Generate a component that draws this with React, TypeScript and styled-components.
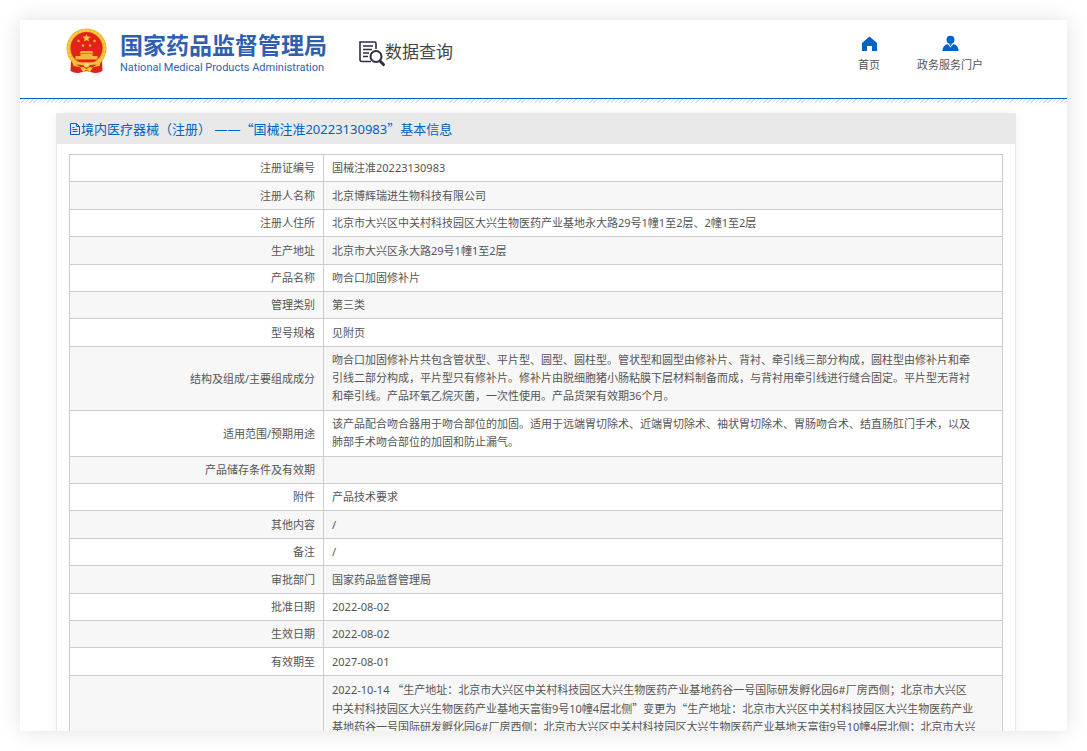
import React from "react";
import styled, { createGlobalStyle } from "styled-components";

const blue = "#0062c4";

const Global = createGlobalStyle`
  * { box-sizing: border-box; }
  body {
    margin: 0;
    background: #fff;
    color: #555;
    font: 11px/18px "Noto Sans", "Noto Sans CJK SC", sans-serif;
  }
`;

const Card = styled.div`
  margin: 20px;
  height: calc(100vh - 40px);
  overflow: hidden;
  background: #fff;
  box-shadow: 0 0 20px rgba(0, 0, 0, 0.12);
`;

const Header = styled.header`
  display: flex;
  align-items: flex-start;
  height: 79px;
  padding: 8px 84px 0 46px;
  border-bottom: 1px solid ${blue};
`;

const Brand = styled.a`
  display: flex;
  gap: 13px;
  color: #2f5fb0;
  text-decoration: none;
`;

const BrandText = styled.span`
  display: flex;
  flex-direction: column;
  padding-top: 2px;
`;

const BrandName = styled.strong`
  font: 700 23px/28px "Noto Sans CJK SC", sans-serif;
`;

const BrandEnglish = styled.span`
  font: 11px/20px Roboto, sans-serif;
`;

const QueryTitle = styled.h1`
  display: flex;
  align-items: center;
  margin: 13px 0 0 32px;
  color: #444;
  font: 400 17px/30px "Noto Sans CJK SC", sans-serif;
`;

const QueryText = styled.span`
  margin-top: -6px;
`;

const Nav = styled.nav`
  display: flex;
  gap: 37px;
  margin-left: auto;
  padding-top: 7px;
`;

const NavLink = styled.a`
  display: flex;
  flex-direction: column;
  align-items: center;
  gap: 4px;
  color: #555;
  text-decoration: none;
`;

const Hatch = styled.div`
  height: 4px;
  background: repeating-linear-gradient(135deg, #dedee2 0 1px, #fff 1px 3px);
`;

const Panel = styled.main`
  margin: 10px 51px 0 36px;
  border: 1px solid #e9e9ec;
  box-shadow: 0 0 10px rgba(0, 0, 0, 0.06);
`;

const PanelTitle = styled.h2`
  display: flex;
  align-items: center;
  margin: 0;
  height: 30px;
  padding: 0 12px;
  background: #e9e9e9;
  color: ${blue};
  font: 400 13px/30px "Noto Sans", "Noto Sans CJK SC", sans-serif;
`;

const Wide = styled.span`
  font-family: "Noto Sans CJK SC", sans-serif;
`;

const InfoTable = styled.table`
  width: calc(100% - 24px);
  margin: 10px 12px 0;
  border-collapse: collapse;
  border: 1px solid #ccc;
`;

const Row = styled.tr`
  height: 27px;
  &:nth-child(5n + 2),
  &:nth-child(5n + 4) {
    height: 28px;
  }
  &:nth-child(even) {
    background: #f7f7f7;
  }
`;

const Label = styled.th`
  width: 254px;
  padding: 4px 8px;
  border: 1px solid #ccc;
  font-weight: 400;
  text-align: right;
`;

const Value = styled.td<{ $long: boolean }>`
  padding: ${(p) => (p.$long ? "4px 25px 5px 8px" : "4px 25px 4px 8px")};
  border: 1px solid #ccc;
`;

const rows: [string, string][] = [
  ["注册证编号", "国械注准20223130983"],
  ["注册人名称", "北京博辉瑞进生物科技有限公司"],
  ["注册人住所", "北京市大兴区中关村科技园区大兴生物医药产业基地永大路29号1幢1至2层、2幢1至2层"],
  ["生产地址", "北京市大兴区永大路29号1幢1至2层"],
  ["产品名称", "吻合口加固修补片"],
  ["管理类别", "第三类"],
  ["型号规格", "见附页"],
  ["结构及组成/主要组成成分", "吻合口加固修补片共包含管状型、平片型、圆型、圆柱型。管状型和圆型由修补片、背衬、牵引线三部分构成，圆柱型由修补片和牵引线二部分构成，平片型只有修补片。修补片由脱细胞猪小肠粘膜下层材料制备而成，与背衬用牵引线进行缝合固定。平片型无背衬和牵引线。产品环氧乙烷灭菌，一次性使用。产品货架有效期36个月。"],
  ["适用范围/预期用途", "该产品配合吻合器用于吻合部位的加固。适用于远端胃切除术、近端胃切除术、袖状胃切除术、胃肠吻合术、结直肠肛门手术，以及肺部手术吻合部位的加固和防止漏气。"],
  ["产品储存条件及有效期", ""],
  ["附件", "产品技术要求"],
  ["其他内容", "/"],
  ["备注", "/"],
  ["审批部门", "国家药品监督管理局"],
  ["批准日期", "2022-08-02"],
  ["生效日期", "2022-08-02"],
  ["有效期至", "2027-08-01"],
  ["", "2022-10-14 “生产地址：北京市大兴区中关村科技园区大兴生物医药产业基地药谷一号国际研发孵化园6#厂房西侧；北京市大兴区中关村科技园区大兴生物医药产业基地天富街9号10幢4层北侧”变更为“生产地址：北京市大兴区中关村科技园区大兴生物医药产业基地药谷一号国际研发孵化园6#厂房西侧；北京市大兴区中关村科技园区大兴生物医药产业基地天富街9号10幢4层北侧；北京市大兴"],
];

/* Curly quotes take the full-width shapes of the Chinese face. */
const Mixed = ({ text }: { text: string }) => (
  <>
    {text.split(/([“”]+)/).map((part, i) =>
      i % 2 ? <Wide key={i}>{part}</Wide> : part
    )}
  </>
);

const Emblem = () => (
  <svg width="41" height="46" viewBox="0 0 41 46" aria-hidden="true">
    <path d="M5 32 4.500 43q4 2.500 8 2l8-2 8 2q4 .5 8-2L36 32z" fill="#d9261c" />
    <circle cx="20.500" cy="20.500" r="20" fill="#eeb429" />
    <circle cx="20.500" cy="20.500" r="18" fill="none" stroke="#f8d045" strokeWidth="2" strokeDasharray="3 1" />
    <circle cx="20.500" cy="20" r="16" fill="#e3231b" />
    <path d="m20.500 6 1.100 2.600 2.900.2-2.200 1.900.7 2.800-2.500-1.500-2.500 1.500.7-2.800-2.200-1.900 2.900-.2z" fill="#f8c63f" />
    <g fill="#f3b83a">
      <circle cx="12.500" cy="13" r="1.200" /><circle cx="28.500" cy="13" r="1.200" />
      <circle cx="17" cy="17.500" r="1.200" /><circle cx="24" cy="17.500" r="1.200" />
      <path d="M15 23h11l1.500 2.500h-14zM14.500 26h12v2h-12zM9.500 28h22v3.500h-22z" />
    </g>
    <path d="M6 33q14.500 3 29 0l-1.500 5-6.500 1-3 5-3.500-2-3.500 2-3-5-6.500-1z" fill="#f5c136" />
    <path d="m10 36.500 6 .5 4.500 2 4.500-2 6-.5-5 3-2.500-.5-3 2-3-2-2.500.5z" fill="#d9261c" />
    <circle cx="20.500" cy="37" r="2.500" fill="#f9d966" />
  </svg>
);

const QueryIcon = () => (
  <svg width="26" height="26" viewBox="0 0 26 26" fill="none" stroke="#2f2d42" aria-hidden="true">
    <path d="M17 8V2.500Q17 1 15.500 1H1v17.500q0 2 2 2h9" strokeWidth="1.600" />
    <path d="M4 5h10M4 8.500h9M4 12h6M4 15.500h5" strokeWidth="1.500" />
    <circle cx="17" cy="15.500" r="5.500" strokeWidth="2" />
    <path d="m21 20 4.500 4.500" strokeWidth="3" />
  </svg>
);

const HomeIcon = () => (
  <svg width="17" height="17" viewBox="0 0 17 17" aria-hidden="true">
    <path d="M8.500 1.500 16 8v8h-5v-5H6v5H1V8z" fill={blue} />
  </svg>
);

const UserIcon = () => (
  <svg width="17" height="17" viewBox="0 0 17 17" fill={blue} aria-hidden="true">
    <circle cx="8.500" cy="4.800" r="4" />
    <path d="M.5 16q0-5.500 5-7l3 3.500 3-3.500q5 1.500 5 7zM7 8.500h3l-1.500 3z" />
  </svg>
);

const DocIcon = () => (
  <svg width="12" height="13" viewBox="0 0 12 13" fill="none" stroke={blue} aria-hidden="true">
    <path d="M1.500.5h6l3 3v8h-9zM7.500.5v3h3M3.500 4.500h2M3.500 6.500h5M3.500 8.500h5" />
  </svg>
);

export default function App() {
  return (
    <>
      <Global />
      <Card>
        <Header>
          <Brand href="#">
            <Emblem />
            <BrandText>
              <BrandName>国家药品监督管理局</BrandName>
              <BrandEnglish>National Medical Products Administration</BrandEnglish>
            </BrandText>
          </Brand>
          <QueryTitle>
            <QueryIcon />
            <QueryText>数据查询</QueryText>
          </QueryTitle>
          <Nav>
            <NavLink href="#"><HomeIcon />首页</NavLink>
            <NavLink href="#"><UserIcon />政务服务门户</NavLink>
          </Nav>
        </Header>
        <Hatch />
        <Panel>
          <PanelTitle>
            <DocIcon />
            <span><Mixed text="境内医疗器械（注册） ——“国械注准20223130983”基本信息" /></span>
          </PanelTitle>
          <InfoTable>
            <tbody>
              {rows.map(([label, value], i) => (
                <Row key={i}>
                  <Label scope="row">{label}</Label>
                  <Value $long={value.length > 60}><Mixed text={value} /></Value>
                </Row>
              ))}
            </tbody>
          </InfoTable>
        </Panel>
      </Card>
    </>
  );
}
